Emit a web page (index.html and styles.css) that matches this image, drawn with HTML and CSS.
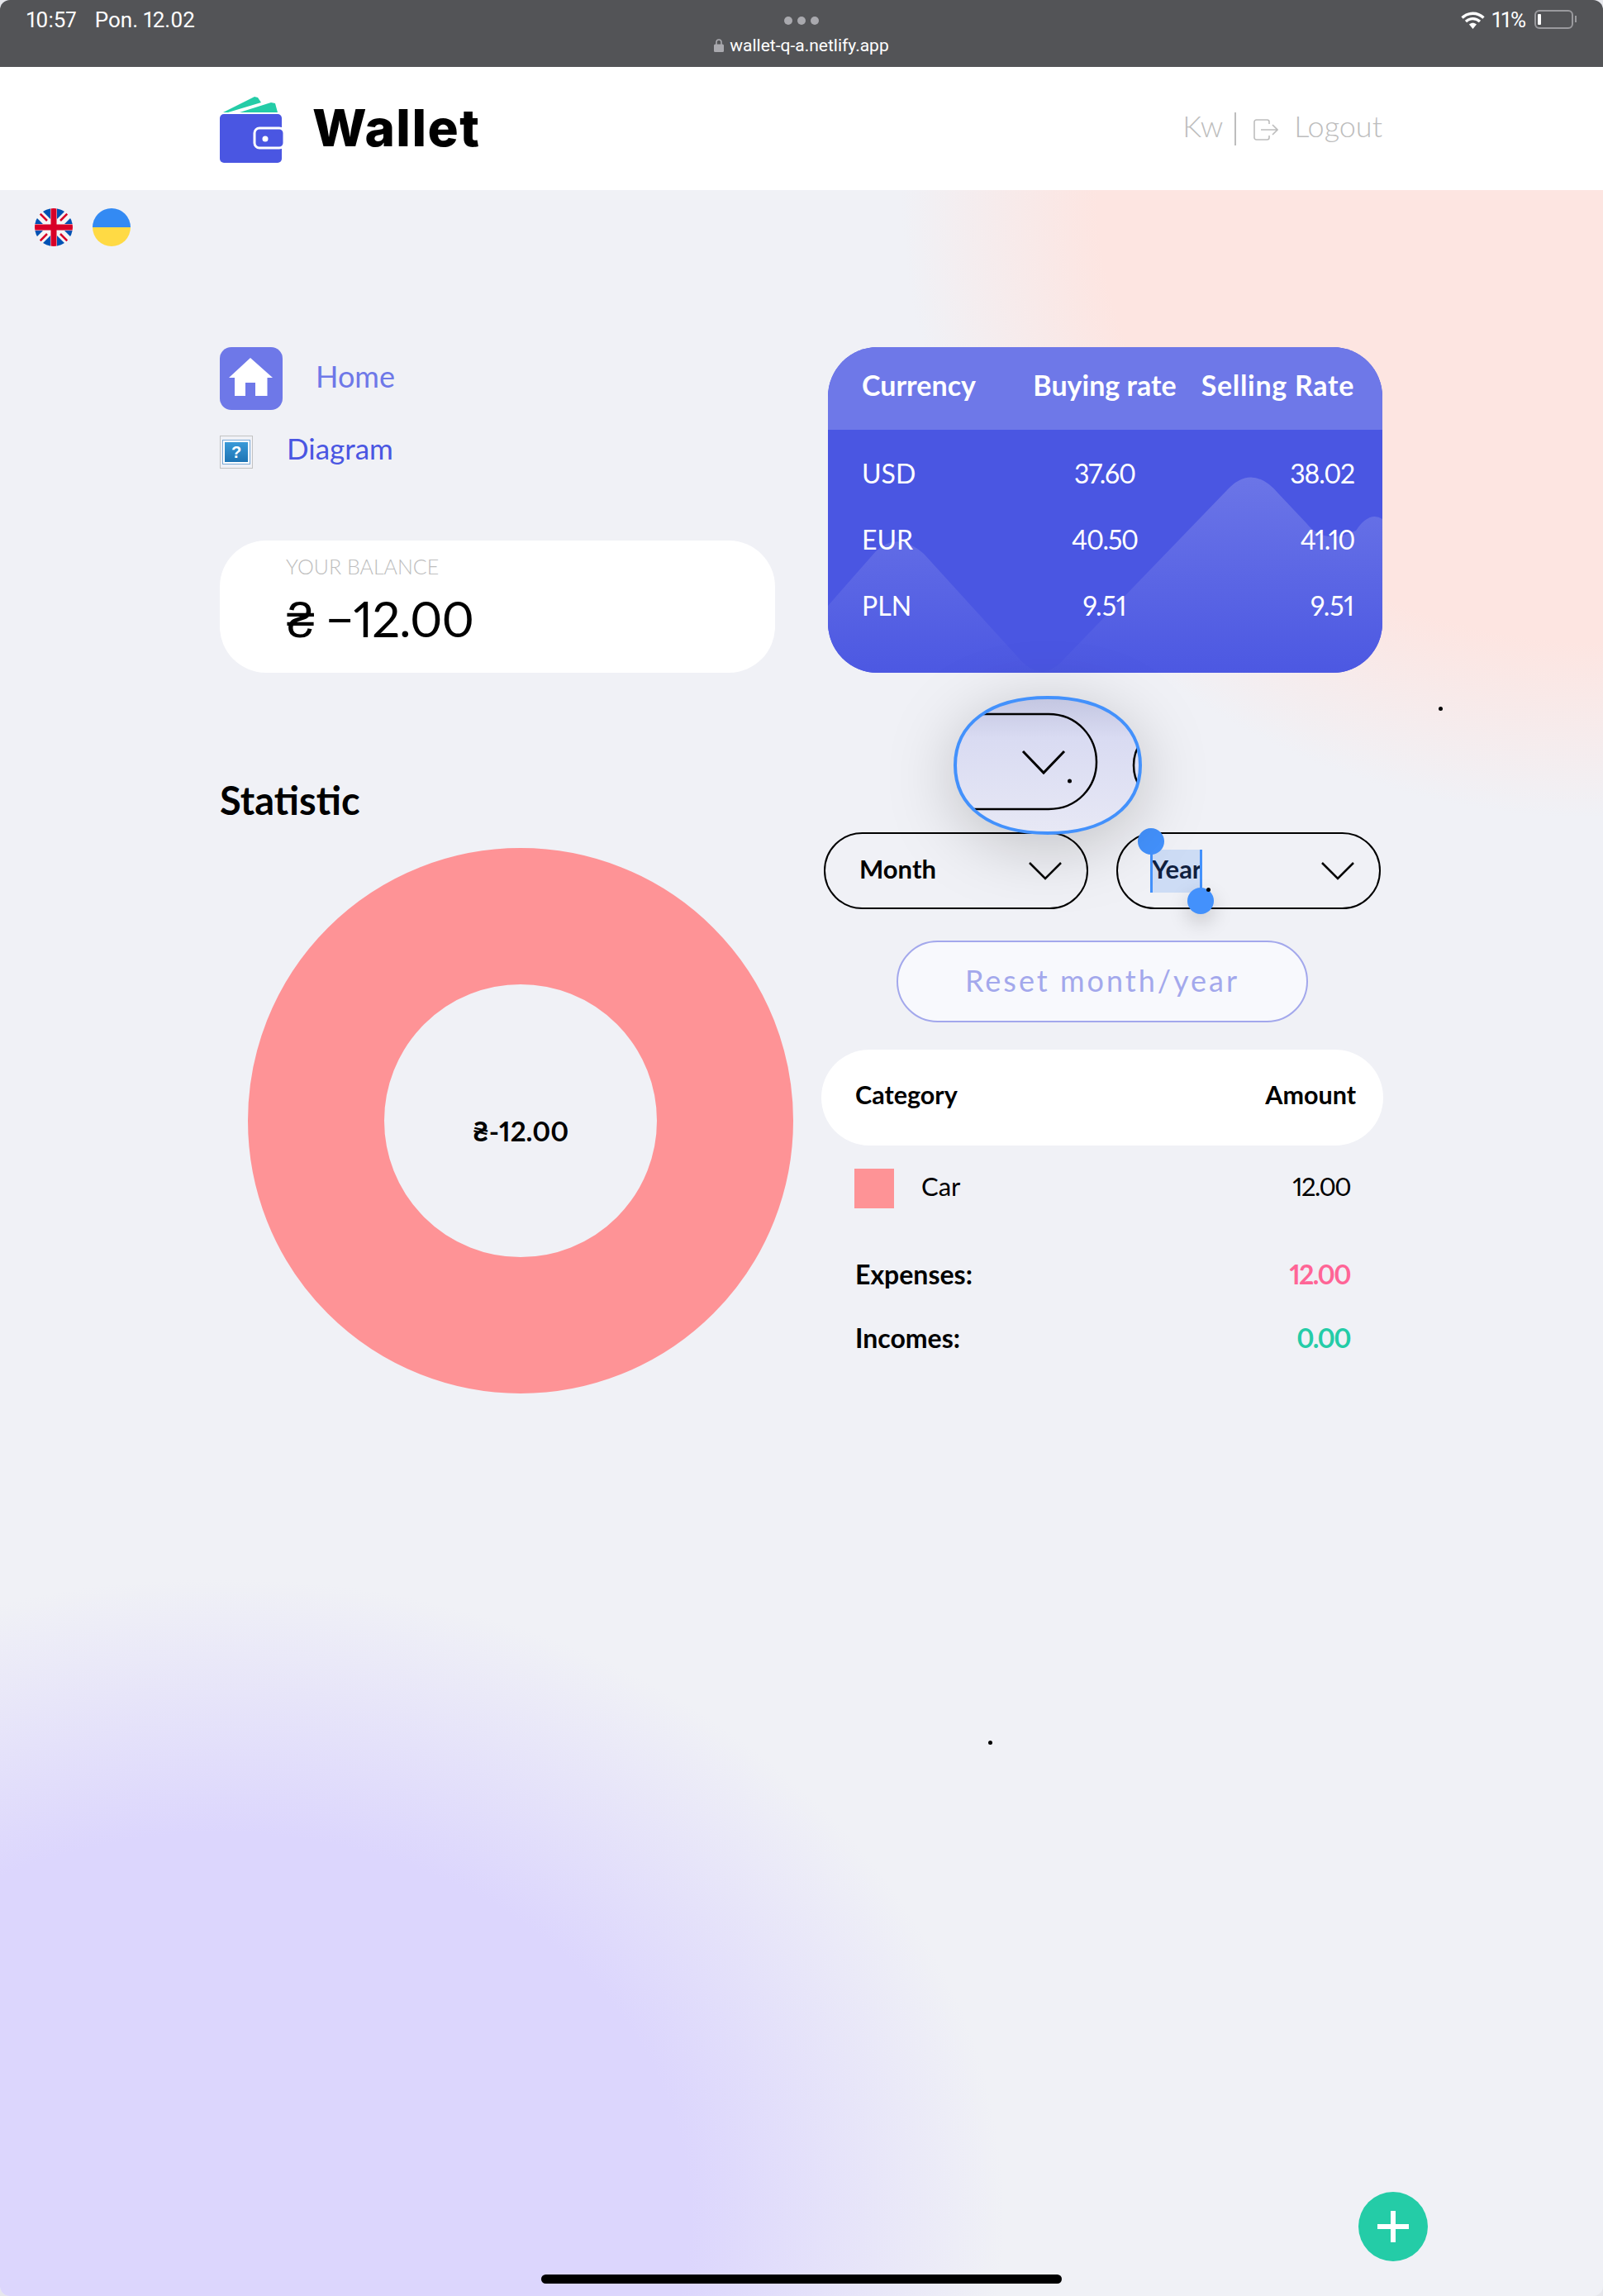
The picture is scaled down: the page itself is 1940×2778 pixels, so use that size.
FILE: index.html
```html
<!DOCTYPE html>
<html lang="en">
<head>
    <meta charset="UTF-8">
    <meta name="viewport" content="width=device-width, initial-scale=1.0">
    <title>Wallet</title>
    <link rel="stylesheet" href="styles.css">
</head>
<body>

<div class="screen">

    <!-- Status bar -->
    <div class="statusbar">
        <div class="status-left"><span>10:57</span><span>Pon. 12.02</span></div>
        <div class="status-center">
            <div class="tab-dots"><i></i><i></i><i></i></div>
            <div class="url">
                <svg class="lock" width="12" height="16" viewBox="0 0 12 16"><path d="M3 7V4a3 3 0 0 1 6 0v3" fill="none" stroke="#a9a9ae" stroke-width="1.6"/><rect y="6.500" width="12" height="9.500" rx="1.500" fill="#a9a9ae"/></svg>
                <span>wallet-q-a.netlify.app</span>
            </div>
        </div>
        <div class="status-right">
            <svg width="29" height="21" viewBox="0 0 29 21"><path d="M1.500 7.500C9 .5 20 .5 27.500 7.500M6 12c5-4.500 12-4.500 17 0" fill="none" stroke="#fff" stroke-width="3.400"/><path d="M10 15.500c3-2.400 6-2.400 9 0L14.500 21z" fill="#fff"/></svg>
            <span>11%</span>
            <div class="battery"><i></i></div>
            <div class="battery-nub"></div>
        </div>
    </div>

    <!-- Header -->
    <header class="header">
        <div class="logo">
            <svg width="79" height="80" viewBox="0 0 79 80">
                <path d="M4 19 42 0l4 1 4 6L10 19z" fill="#24cca7"/>
                <path d="M24 19 62 7l5 1 3 11z" fill="#24cca7"/>
                <rect y="21" width="75" height="59" rx="5" fill="#4a56e2"/>
                <rect x="42" y="38" width="36" height="24" rx="6" fill="#4a56e2" stroke="#fff" stroke-width="3"/>
                <circle cx="55" cy="51" r="3.500" fill="#fff"/>
            </svg>
            <span class="logo-text">Wallet</span>
        </div>
        <div class="user">
            <span>Kw</span>
            <span class="user-line"></span>
            <svg class="logout-icon" width="30" height="26" viewBox="0 0 30 26" fill="none" stroke="#bdbdbd" stroke-width="1.600"><path d="M19 6V3.500A2.500 2.500 0 0 0 16.500 1h-13A2.500 2.500 0 0 0 1 3.500v19A2.500 2.500 0 0 0 3.500 25h13a2.500 2.500 0 0 0 2.500-2.500V20"/><path d="M9 13h20M23 7l6 6-6 6"/></svg>
            <span class="user-logout">Logout</span>
        </div>
    </header>

    <main class="main">

        <div class="langs">
            <svg class="flag" viewBox="0 0 46 46">
                <defs><clipPath id="flag-clip"><circle cx="23" cy="23" r="23"/></clipPath></defs>
                <g clip-path="url(#flag-clip)">
                    <rect width="46" height="46" fill="#f5f5f5"/>
                    <path d="M8 2 19 13V0H9zM27 0v13L38 2zM0 9v10h10zM46 9v10H36zM0 27v10l10-10zM46 27v10L36 27zM8 44l11-11v13H9zM27 33l11 11-1 2H27z" fill="#0052b4"/>
                    <path d="M0 0 15 15M46 0 31 15M0 46 15 31M46 46 31 31" stroke="#d80027" stroke-width="2.500"/>
                    <rect x="19.500" width="7" height="46" fill="#d80027"/>
                    <rect y="19.500" width="46" height="7" fill="#d80027"/>
                </g>
            </svg>
            <svg class="flag" viewBox="0 0 46 46">
                <path d="M0 23a23 23 0 0 1 46 0z" fill="#338af3"/>
                <path d="M0 23a23 23 0 0 0 46 0z" fill="#ffda44"/>
            </svg>
        </div>

        <div class="top-grid">
            <div class="left-top">
                <nav class="nav">
                    <a class="nav-home">
                        <span class="home-tile">
                            <svg width="76" height="76" viewBox="0 0 76 76"><path d="M37 13 64 37h-6.500v22H43V43H31v16H18V37h-7z" fill="#fff"/></svg>
                        </span>
                        <span>Home</span>
                    </a>
                    <a class="nav-diagram">
                        <span class="broken-img"><span>?</span></span>
                        <span class="diagram-text">Diagram</span>
                    </a>
                </nav>
                <div class="balance">
                    <div class="balance-label">YOUR BALANCE</div>
                    <div class="balance-value"><span class="hryvnia">₴</span> −12.00</div>
                </div>
            </div>

            <div class="rates">
                <svg class="rates-waves" viewBox="0 0 671 394" preserveAspectRatio="none">
                    <defs>
                        <linearGradient id="wave-fill" x1="0" y1="0" x2="0" y2="1">
                            <stop offset="0" stop-color="#6b75e7"/>
                            <stop offset="1" stop-color="#4c58e2"/>
                        </linearGradient>
                    </defs>
                    <path d="M0 313 58 247Q84 222 116 250L228 373Q258 410 286 377L483 173Q513 140 545 177L579 213Q600 240 639 222Q655 198 671 208V394H0z" fill="url(#wave-fill)"/>
                </svg>
                <div class="rates-row rates-head">
                    <span>Currency</span><span>Buying rate</span><span>Selling Rate</span>
                </div>
                <div class="rates-body">
                    <div class="rates-row"><span>USD</span><span class="num">37.60</span><span class="num">38.02</span></div>
                    <div class="rates-row"><span>EUR</span><span class="num">40.50</span><span class="num">41.10</span></div>
                    <div class="rates-row"><span>PLN</span><span>9.51</span><span>9.51</span></div>
                </div>
            </div>
        </div>

        <div class="stats-grid">
            <section class="chart-col">
                <h2 class="stats-title">Statistic</h2>
                <div class="donut">
                    <svg width="660" height="660" viewBox="0 0 660 660"><circle cx="330" cy="330" r="247.500" fill="none" stroke="#fe9396" stroke-width="165"/></svg>
                    <div class="donut-label">₴-12.00</div>
                </div>
            </section>

            <section class="table-col">
                <div class="selects">
                    <div class="select">
                        <span>Month</span>
                        <svg class="chevron" width="42" height="24" viewBox="0 0 42 24"><path d="M2 2 21 21 40 2" fill="none" stroke="#000" stroke-width="2.500"/></svg>
                    </div>
                    <div class="select">
                        <span class="selected-text">Year
                            <i class="handle handle-start"></i>
                            <i class="handle handle-end"></i>
                        </span>
                        <svg class="chevron" width="42" height="24" viewBox="0 0 42 24"><path d="M2 2 21 21 40 2" fill="none" stroke="#000" stroke-width="2.500"/></svg>
                    </div>
                </div>
                <button class="reset">Reset month/year</button>
                <div class="table-head"><span>Category</span><span>Amount</span></div>
                <div class="table-row">
                    <span class="swatch"></span>
                    <span class="row-name">Car</span>
                    <span class="amount">12.00</span>
                </div>
                <div class="total total-first"><span>Expenses:</span><span class="amount expenses">12.00</span></div>
                <div class="total"><span>Incomes:</span><span class="amount incomes">0.00</span></div>
            </section>
        </div>

        <!-- Text loupe over the page -->
        <svg class="loupe" width="228" height="168" viewBox="0 0 228 168">
            <defs>
                <linearGradient id="loupe-fill" x1="0" y1="0" x2="0" y2="1">
                    <stop offset="0" stop-color="#c3c6e1"/>
                    <stop offset=".3" stop-color="#d9dbf2"/>
                    <stop offset="1" stop-color="#e7e8f5"/>
                </linearGradient>
                <clipPath id="loupe-clip"><path d="M114 2C184 2 226 34 226 84 226 134 184 166 114 166 44 166 2 134 2 84 2 34 44 2 114 2z"/></clipPath>
            </defs>
            <path d="M114 2C184 2 226 34 226 84 226 134 184 166 114 166 44 166 2 134 2 84 2 34 44 2 114 2z" fill="url(#loupe-fill)"/>
            <g clip-path="url(#loupe-clip)" fill="none" stroke="#000" stroke-width="2.500">
                <path d="M0 22H115C150 22 173 50 173 80 173 110 150 137 115 137H0"/>
                <path d="M84 67 109 93 134 67" stroke-width="3"/>
                <path d="M232 50C222 60 218 72 218 84 218 96 222 108 232 118"/>
            </g>
            <circle cx="140.500" cy="103" r="2.500" fill="#000"/>
            <path d="M114 2C184 2 226 34 226 84 226 134 184 166 114 166 44 166 2 134 2 84 2 34 44 2 114 2z" fill="none" stroke="#4391fc" stroke-width="4"/>
        </svg>

        <i class="speck speck-a"></i>
        <i class="speck speck-b"></i>
        <i class="speck speck-c"></i>

        <button class="add-btn">
            <svg width="38" height="38" viewBox="0 0 38 38"><path d="M16 0h6v16h16v6H22v16h-6V22H0v-6h16z" fill="#fff"/></svg>
        </button>
        <div class="home-bar"></div>
    </main>
</div>

</body>
</html>
```

FILE: styles.css
```css
* {
    box-sizing: border-box;
}
body {
    margin: 0;
    background-color: #e6e7ec;
    font-family: "Lato", "Liberation Sans", sans-serif;
    font-variant-numeric: proportional-nums;
    color: #000;
}
.screen {
    width: 1940px;
    height: 2778px;
    overflow: hidden;
    border-radius: 12px;
    display: flex;
    flex-direction: column;
}

/* Status bar */
.statusbar {
    height: 81px;
    background-color: #535457;
    color: #fff;
    font-family: "Roboto", sans-serif;
    font-size: 26px;
    display: grid;
    grid-template-columns: 1fr auto 1fr;
    padding: 9px 32px 0;
    flex-shrink: 0;
}
.status-left {
    display: flex;
    gap: 22px;
}
.status-center {
    display: flex;
    flex-direction: column;
    align-items: center;
}
.tab-dots {
    display: flex;
    gap: 6px;
    margin-top: 11px;
}
.tab-dots i {
    width: 10px;
    height: 10px;
    border-radius: 50%;
    background-color: #a9a9ae;
}
.url {
    display: flex;
    align-items: center;
    gap: 7px;
    margin-top: 13px;
    font-size: 21px;
}
.status-right {
    display: flex;
    justify-content: flex-end;
    align-items: flex-start;
    gap: 8px;
}
.status-right svg {
    margin-top: 5px;
}
.battery {
    width: 47px;
    height: 23px;
    margin-top: 3px;
    margin-left: 2px;
    border: 2px solid #9a9a9e;
    border-radius: 6px;
    padding: 3px 2px;
}
.battery i {
    display: block;
    width: 4px;
    height: 100%;
    background-color: #fff;
    border-radius: 1px;
}
.battery-nub {
    width: 2px;
    height: 8px;
    margin: 10px 0 0 -6px;
    background-color: #9a9a9e;
}

/* Header */
.header {
    height: 149px;
    background-color: #fff;
    display: flex;
    justify-content: space-between;
    align-items: center;
    padding: 0 267px 0 266px;
    flex-shrink: 0;
}
.logo {
    display: flex;
    align-items: center;
    gap: 33px;
    margin-top: 2px;
}
.logo-text {
    font-family: "Inter", sans-serif;
    font-weight: 800;
    font-size: 62px;
    letter-spacing: 1.500px;
    margin-bottom: 5px;
}
.user {
    display: flex;
    align-items: center;
    color: #bdbdbd;
    font-size: 36px;
    font-weight: 300;
}
.user > span:first-child,
.user-logout {
    margin-bottom: 7px;
}
.user-line {
    width: 2px;
    height: 40px;
    margin: 0 21px 0 14px;
    background-color: #bdbdbd;
}
.logout-icon {
    margin-top: 3px;
}
.user-logout {
    margin-left: 19px;
}

/* Main area with the blurred colour spots */
.main {
    position: relative;
    flex: 1;
    background-color: #f0f1f6;
    background-image:
        radial-gradient(ellipse 950px 770px at 265px 2450px, #dcd6fd 0, #dcd6fd 60%, rgba(220, 214, 253, 0) 100%),
        radial-gradient(ellipse 850px 760px at 1940px 0, #fde5e1 0, #fde5e1 72%, rgba(253, 229, 225, 0) 100%);
}
.langs {
    display: flex;
    gap: 24px;
    padding: 22px 0 0 42px;
}
.flag {
    width: 46px;
    height: 46px;
}
.top-grid {
    display: grid;
    grid-template-columns: 672px 671px;
    column-gap: 64px;
    margin: 122px 0 0 266px;
    height: 394px;
}
.left-top {
    display: flex;
    flex-direction: column;
    justify-content: space-between;
}
.nav a {
    display: flex;
    align-items: center;
    font-size: 36px;
}
.nav-home {
    color: #6e78e8;
    gap: 40px;
}
.nav-home span:last-child {
    margin-bottom: 7px;
}
.nav-diagram {
    color: #4a56e2;
    gap: 41px;
    margin-top: 31px;
    height: 40px;
}
.nav .nav-diagram {
    align-items: flex-start;
}
.diagram-text {
    font-size: 35px;
    line-height: 40px;
    margin-top: -5px;
}
.home-tile {
    width: 76px;
    height: 76px;
    background-color: #6e78e8;
    border-radius: 14px;
}
.home-tile svg {
    display: block;
}
.broken-img {
    width: 40px;
    height: 40px;
    border: 1px solid #c3c3c3;
    padding: 5px 3px;
    display: flex;
}
.broken-img span {
    flex: 1;
    background: linear-gradient(#3a9ad8, #1e74b4);
    border: 2px solid #fff;
    outline: 1.500px solid #7ba9d6;
    color: #fff;
    font-family: "Liberation Sans", sans-serif;
    font-size: 20px;
    font-weight: 700;
    text-align: center;
    line-height: 24px;
}
.balance {
    height: 160px;
    background-color: #fff;
    border-radius: 56px;
    padding: 16px 0 0 80px;
}
.balance-label {
    color: #bdbdbd;
    font-size: 25px;
    font-weight: 300;
}
.balance-value {
    margin-top: 11px;
    font-size: 60px;
    letter-spacing: -1px;
    line-height: 74px;
}
.hryvnia {
    font-family: "Roboto", sans-serif;
    font-weight: 300;
    margin-left: 1px;
}

/* Rates card */
.rates {
    position: relative;
    height: 394px;
    border-radius: 60px;
    overflow: hidden;
    background-color: #4a56e2;
    color: #fff;
}
.rates-waves {
    position: absolute;
    top: 0;
    left: 0;
    width: 100%;
    height: 100%;
}
.rates-row {
    position: relative;
    display: grid;
    grid-template-columns: 194px 200px 1fr;
    align-items: center;
    margin: 0 34px 0 41px;
    font-size: 32px;
    height: 80px;
}
.rates-row span:nth-child(2) {
    text-align: center;
}
.rates-row span:nth-child(3) {
    text-align: right;
}
.rates-head {
    height: 100px;
    margin: 0;
    padding: 0 34px 10px 41px;
    background-color: #6e78e8;
    font-weight: 700;
    font-size: 34px;
}
.rates-head span:nth-child(3) {
    letter-spacing: 0.700px;
}
.rates-body {
    padding-top: 12px;
}
.num {
    letter-spacing: -1.200px;
}

/* Statistics */
.stats-grid {
    display: grid;
    grid-template-columns: 728px 680px;
    margin: 136px 0 0 266px;
}
.stats-title {
    margin: -7px 0 0;
    font-size: 47px;
    font-weight: 700;
    line-height: 50px;
}
.donut {
    position: relative;
    width: 660px;
    height: 660px;
    margin: 33px 0 0 34px;
}
.donut svg {
    display: block;
}
.donut-label {
    position: absolute;
    left: 0;
    right: 0;
    top: 317px;
    line-height: 50px;
    text-align: center;
    font-size: 33px;
    font-weight: 700;
}
.table-col {
    padding-top: 57px;
}
.selects {
    display: flex;
    gap: 34px;
    margin: 0 3px;
}
.select {
    flex: 1;
    height: 93px;
    border: 2px solid #000;
    border-radius: 47px;
    display: flex;
    justify-content: space-between;
    align-items: center;
    padding: 0 29px 0 41px;
    font-size: 31px;
    font-weight: 700;
}
.select > span:first-child:not(.selected-text) {
    margin-bottom: 5px;
}
.selected-text {
    position: relative;
    display: block;
    width: 59px;
    height: 52px;
    line-height: 46px;
    background-color: #cddcf5;
    color: #10203f;
}
.handle {
    position: absolute;
    width: 3px;
    height: 52px;
    top: 0;
    background-color: #4391fc;
}
.handle::after {
    content: "";
    position: absolute;
    left: -15px;
    width: 32px;
    height: 32px;
    border-radius: 50%;
    background-color: #4391fc;
}
.handle-start {
    left: -2px;
}
.handle-start::after {
    top: -26px;
}
.handle-end {
    right: -2px;
}
.handle-end::after {
    top: 46px;
    box-shadow: 0 10px 24px rgba(0, 0, 0, 0.18);
}
.reset {
    display: block;
    width: 498px;
    height: 99px;
    margin: 38px 0 0 91px;
    background-color: #f8f9fd;
    border: 2px solid #a3a8ec;
    border-radius: 50px;
    color: #a3a8ec;
    font-family: inherit;
    font-size: 36px;
    letter-spacing: 3px;
    padding: 0 0 3px;
}
.table-head {
    height: 116px;
    margin-top: 33px;
    background-color: #fff;
    border-radius: 58px;
    display: flex;
    justify-content: space-between;
    align-items: center;
    padding: 0 33px 8px 41px;
    font-size: 30.500px;
    font-weight: 700;
}
.table-row {
    display: flex;
    align-items: center;
    height: 48px;
    margin-top: 28px;
    padding: 0 40px;
    font-size: 31px;
}
.table-row span {
    margin-bottom: 6px;
}
.table-row .swatch {
    margin-bottom: 0;
}
.swatch {
    width: 48px;
    height: 48px;
    background-color: #fe9396;
}
.row-name {
    flex: 1;
    margin-left: 33px;
}
.amount {
    letter-spacing: -1.600px;
}
.total {
    display: flex;
    justify-content: space-between;
    padding: 0 40px 0 41px;
    font-size: 32px;
    font-weight: 700;
    margin-top: 37px;
    line-height: 40px;
}
.total-first {
    margin-top: 60px;
}
.expenses {
    color: #ff6596;
}
.incomes {
    color: #24cca7;
}

/* Loupe and things floating over the page */
.loupe {
    position: absolute;
    left: 1154px;
    top: 612px;
    overflow: visible;
    filter: drop-shadow(0 14px 40px rgba(0, 0, 0, 0.2));
}
.speck {
    position: absolute;
    width: 5px;
    height: 5px;
    border-radius: 50%;
    background-color: #000;
}
.speck-a {
    left: 1741px;
    top: 625px;
}
.speck-b {
    left: 1196px;
    top: 1876px;
}
.speck-c {
    left: 1460px;
    top: 844px;
}
.add-btn {
    position: absolute;
    left: 1644px;
    top: 2422px;
    width: 84px;
    height: 84px;
    border: none;
    border-radius: 50%;
    background-color: #24cca7;
    display: flex;
    align-items: center;
    justify-content: center;
    padding: 0;
}
.home-bar {
    position: absolute;
    left: 655px;
    top: 2522px;
    width: 630px;
    height: 11px;
    border-radius: 6px;
    background-color: #000;
}
```
